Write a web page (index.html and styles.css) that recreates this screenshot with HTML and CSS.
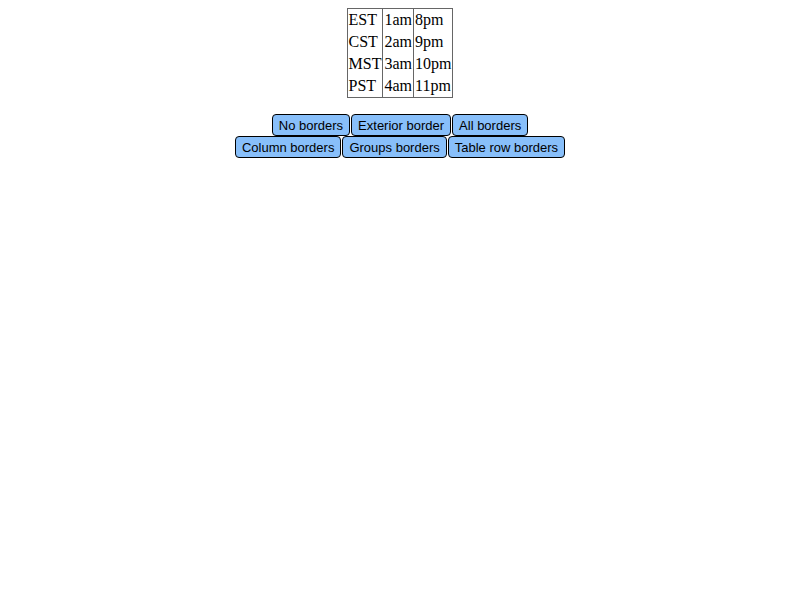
FILE: index.html
```html
<!DOCTYPE html>
<html>
<head>
<meta charset="utf-8">
<link rel="stylesheet" href="styles.css">
</head>
<body>
<table class="tz">
<tr><td>EST</td><td>1am</td><td>8pm</td></tr>
<tr><td>CST</td><td>2am</td><td>9pm</td></tr>
<tr><td>MST</td><td>3am</td><td>10pm</td></tr>
<tr><td>PST</td><td>4am</td><td>11pm</td></tr>
</table>
<div class="controls">
<div class="row">
<button class="btn">No borders</button>
<button class="btn">Exterior border</button>
<button class="btn">All borders</button>
</div>
<div class="row">
<button class="btn">Column borders</button>
<button class="btn">Groups borders</button>
<button class="btn">Table row borders</button>
</div>
</div>
</body>
</html>
```
FILE: styles.css
```css
body {
  margin: 8px;
  background: #fff;
  font-family: "Liberation Serif", serif;
  font-size: 16px;
}
.tz {
  margin: 0 auto;
  border-collapse: collapse;
  border: 1px solid #666;
}
.tz td {
  padding: 2px 1px;
  border-left: 1px solid #666;
  border-right: 1px solid #666;
  line-height: 18px;
}
.controls {
  margin-top: 16px;
  display: flex;
  flex-direction: column;
  align-items: center;
}
.row {
  display: flex;
  gap: 1px;
}
.btn {
  font-family: "Liberation Sans", sans-serif;
  font-size: 13px;
  line-height: 16px;
  height: 22px;
  padding: 3px 6px 1px;
  border: 1px solid #000;
  border-radius: 4px;
  background: #88bffa;
  color: #000;
  margin: 0;
}
```
